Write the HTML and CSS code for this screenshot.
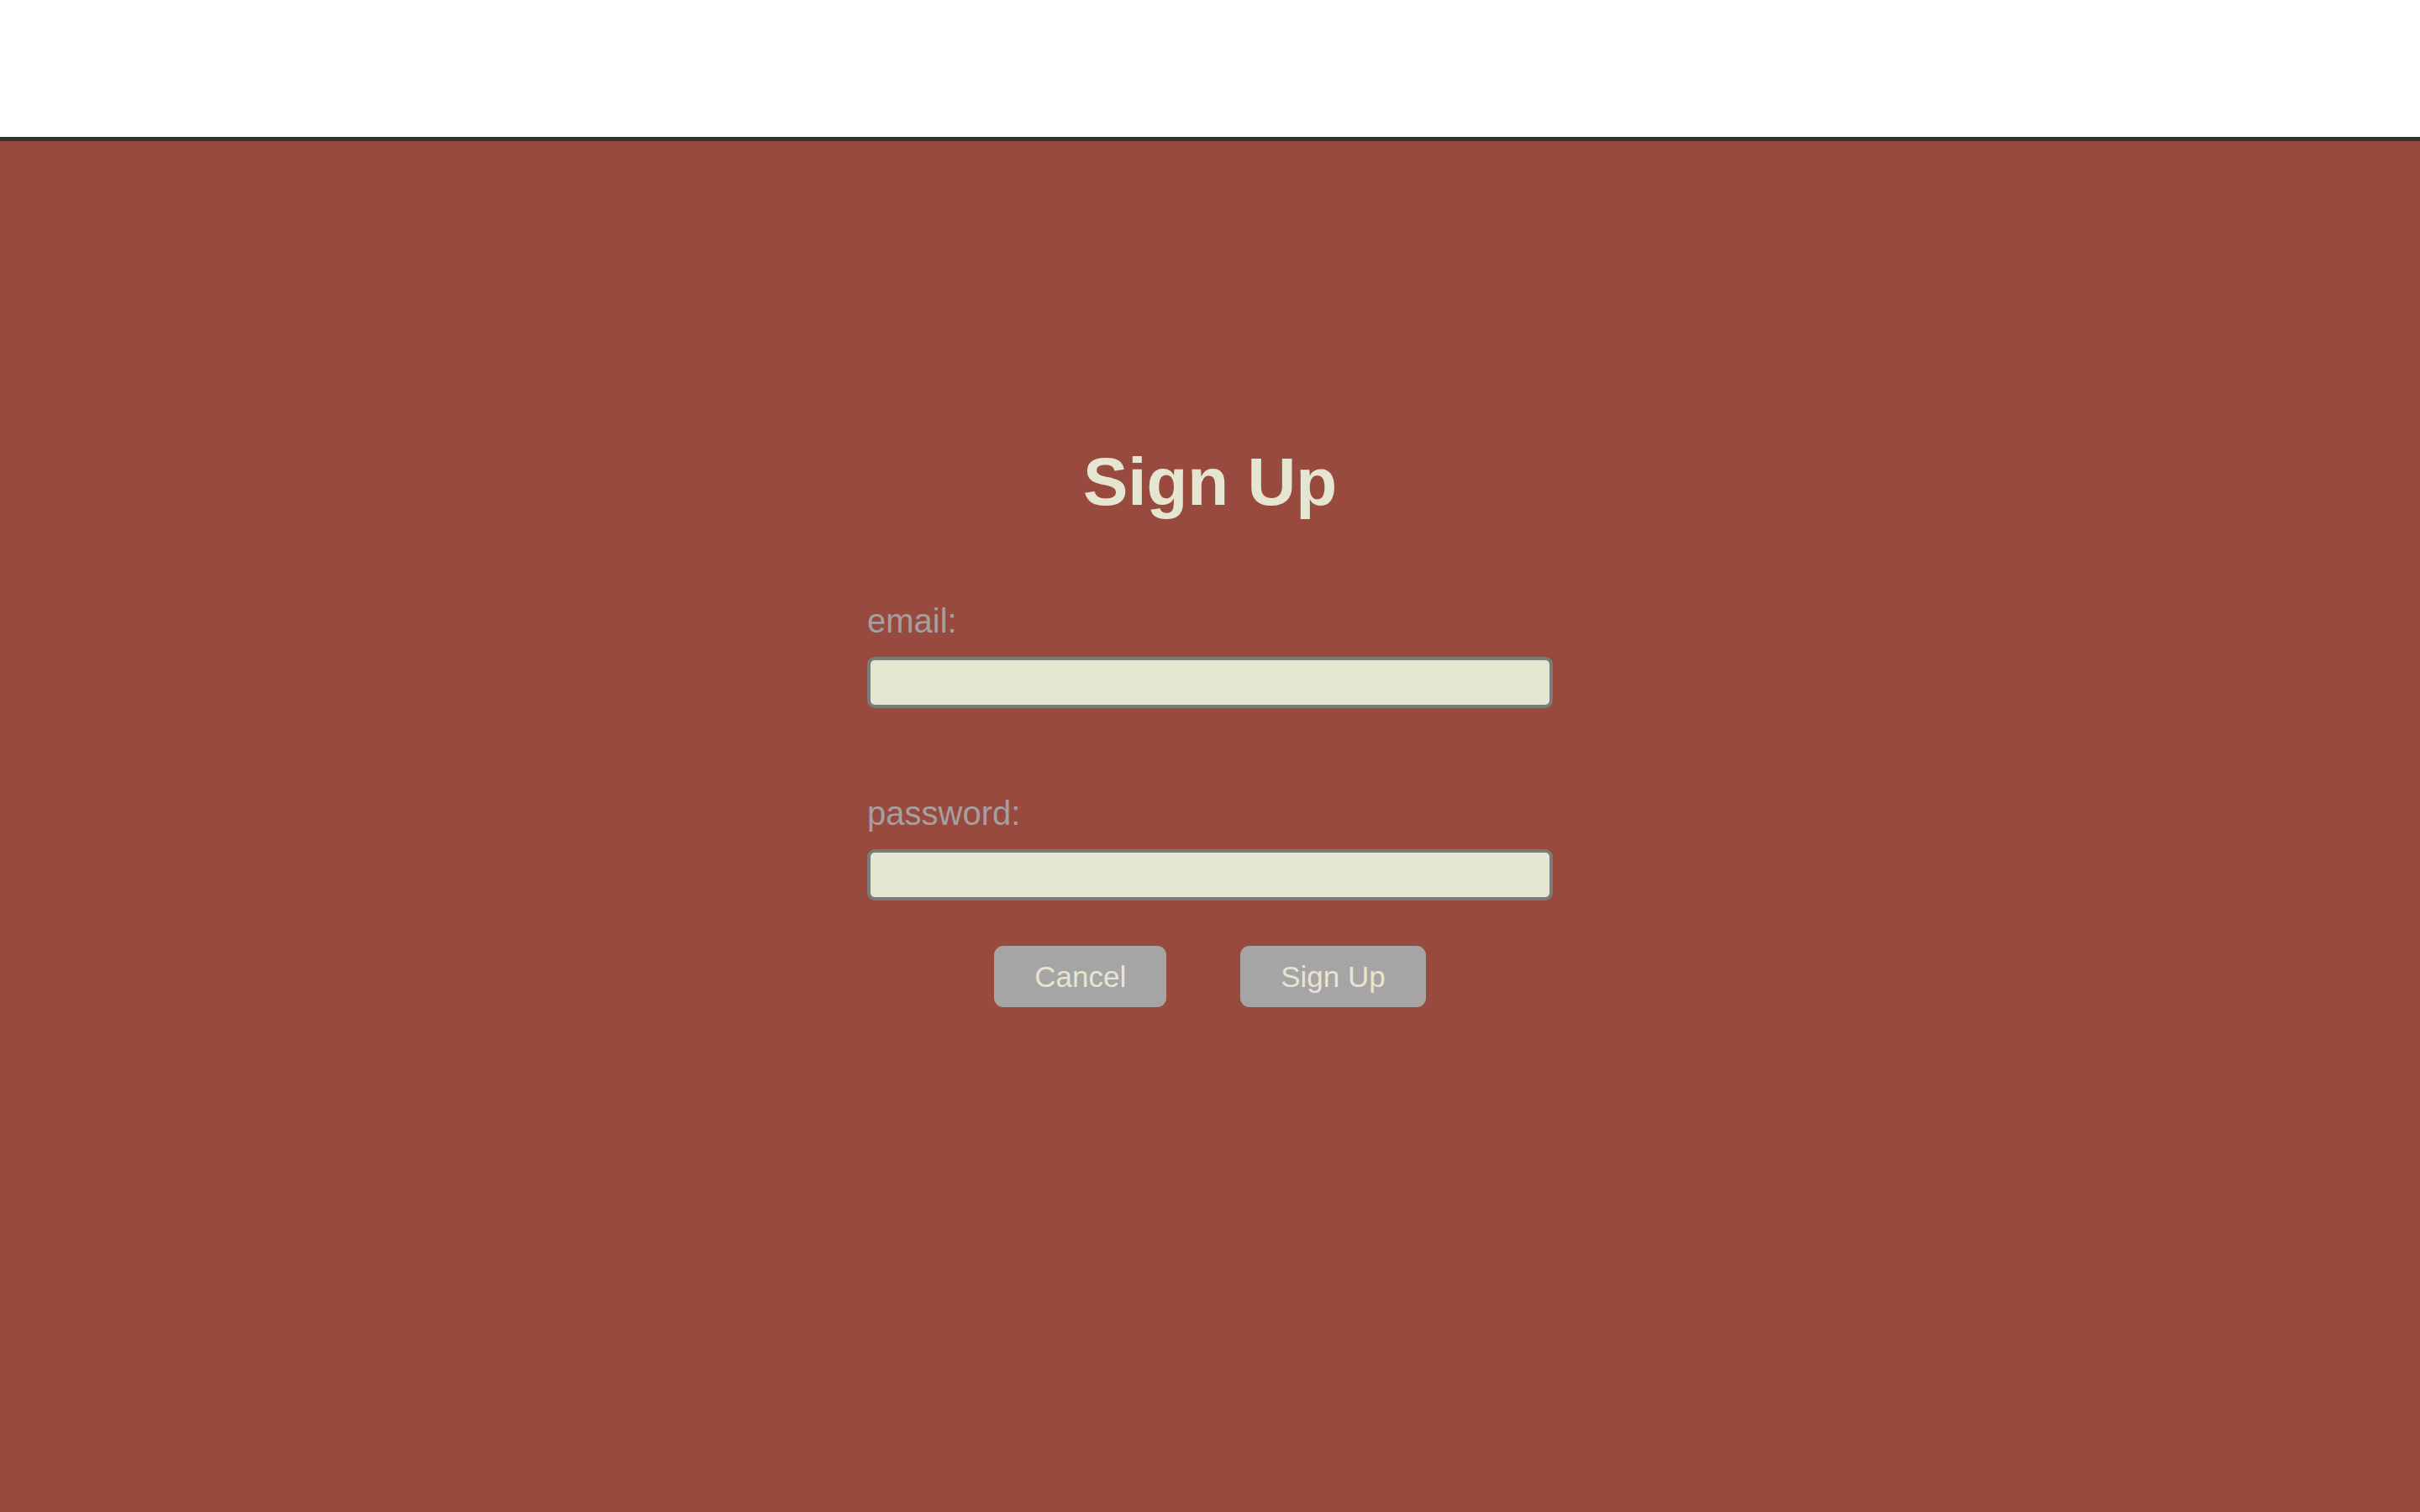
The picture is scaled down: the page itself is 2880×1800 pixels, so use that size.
FILE: index.html
```html
<!DOCTYPE html>
<html lang="en">
<head>
<meta charset="utf-8">
<title>Sign Up</title>
<link rel="stylesheet" href="styles.css">
</head>
<body>
<div class="page">
  <header class="topbar"></header>
  <main class="main">
    <form class="signup">
      <h1 class="title">Sign Up</h1>
      <div class="field">
        <label class="label" for="email">email:</label>
        <input class="input" id="email" type="email">
      </div>
      <div class="field">
        <label class="label" for="password">password:</label>
        <input class="input" id="password" type="password">
      </div>
      <div class="actions">
        <button class="btn" type="button">Cancel</button>
        <button class="btn" type="submit">Sign Up</button>
      </div>
    </form>
  </main>
</div>
</body>
</html>
```

FILE: styles.css
```css
html, body {
  margin: 0;
  padding: 0;
  height: 100%;
}

body {
  font-family: "Liberation Sans", Arial, Helvetica, sans-serif;
  background: #984a3f;
}

.page {
  display: flex;
  flex-direction: column;
  min-height: 100vh;
}

.topbar {
  height: 163px;
  background: #ffffff;
  border-bottom: 5px solid #323335;
  box-shadow: 0 2px 0 #5b5755;
  flex: none;
}

.main {
  flex: 1;
  background: #984a3f;
  display: flex;
  justify-content: center;
  padding-top: 358px;
}

.signup {
  width: 816px;
  display: flex;
  flex-direction: column;
}

.title {
  margin: 0 0 93px;
  font-size: 80px;
  line-height: 96px;
  font-weight: bold;
  color: #e5e6d2;
  text-align: center;
}

.field {
  display: flex;
  flex-direction: column;
  gap: 19px;
  margin-bottom: 101px;
}

.field + .field {
  margin-bottom: 54px;
}

.label {
  font-size: 40px;
  line-height: 48px;
  color: #a3a09f;
}

.input {
  box-sizing: border-box;
  width: 816px;
  height: 61px;
  margin: 0;
  border: 4px solid #7a7a78;
  border-radius: 9px;
  background: #e5e6d2;
  font-family: inherit;
  font-size: 32px;
  padding: 0 12px;
  outline: none;
}

.actions {
  display: flex;
  justify-content: center;
  gap: 88px;
}

.btn {
  font-family: inherit;
  font-size: 35px;
  line-height: 41px;
  padding: 16px 48px;
  border: none;
  border-radius: 11px;
  background: #a6a4a4;
  color: #e5e6d2;
  cursor: pointer;
}
```
